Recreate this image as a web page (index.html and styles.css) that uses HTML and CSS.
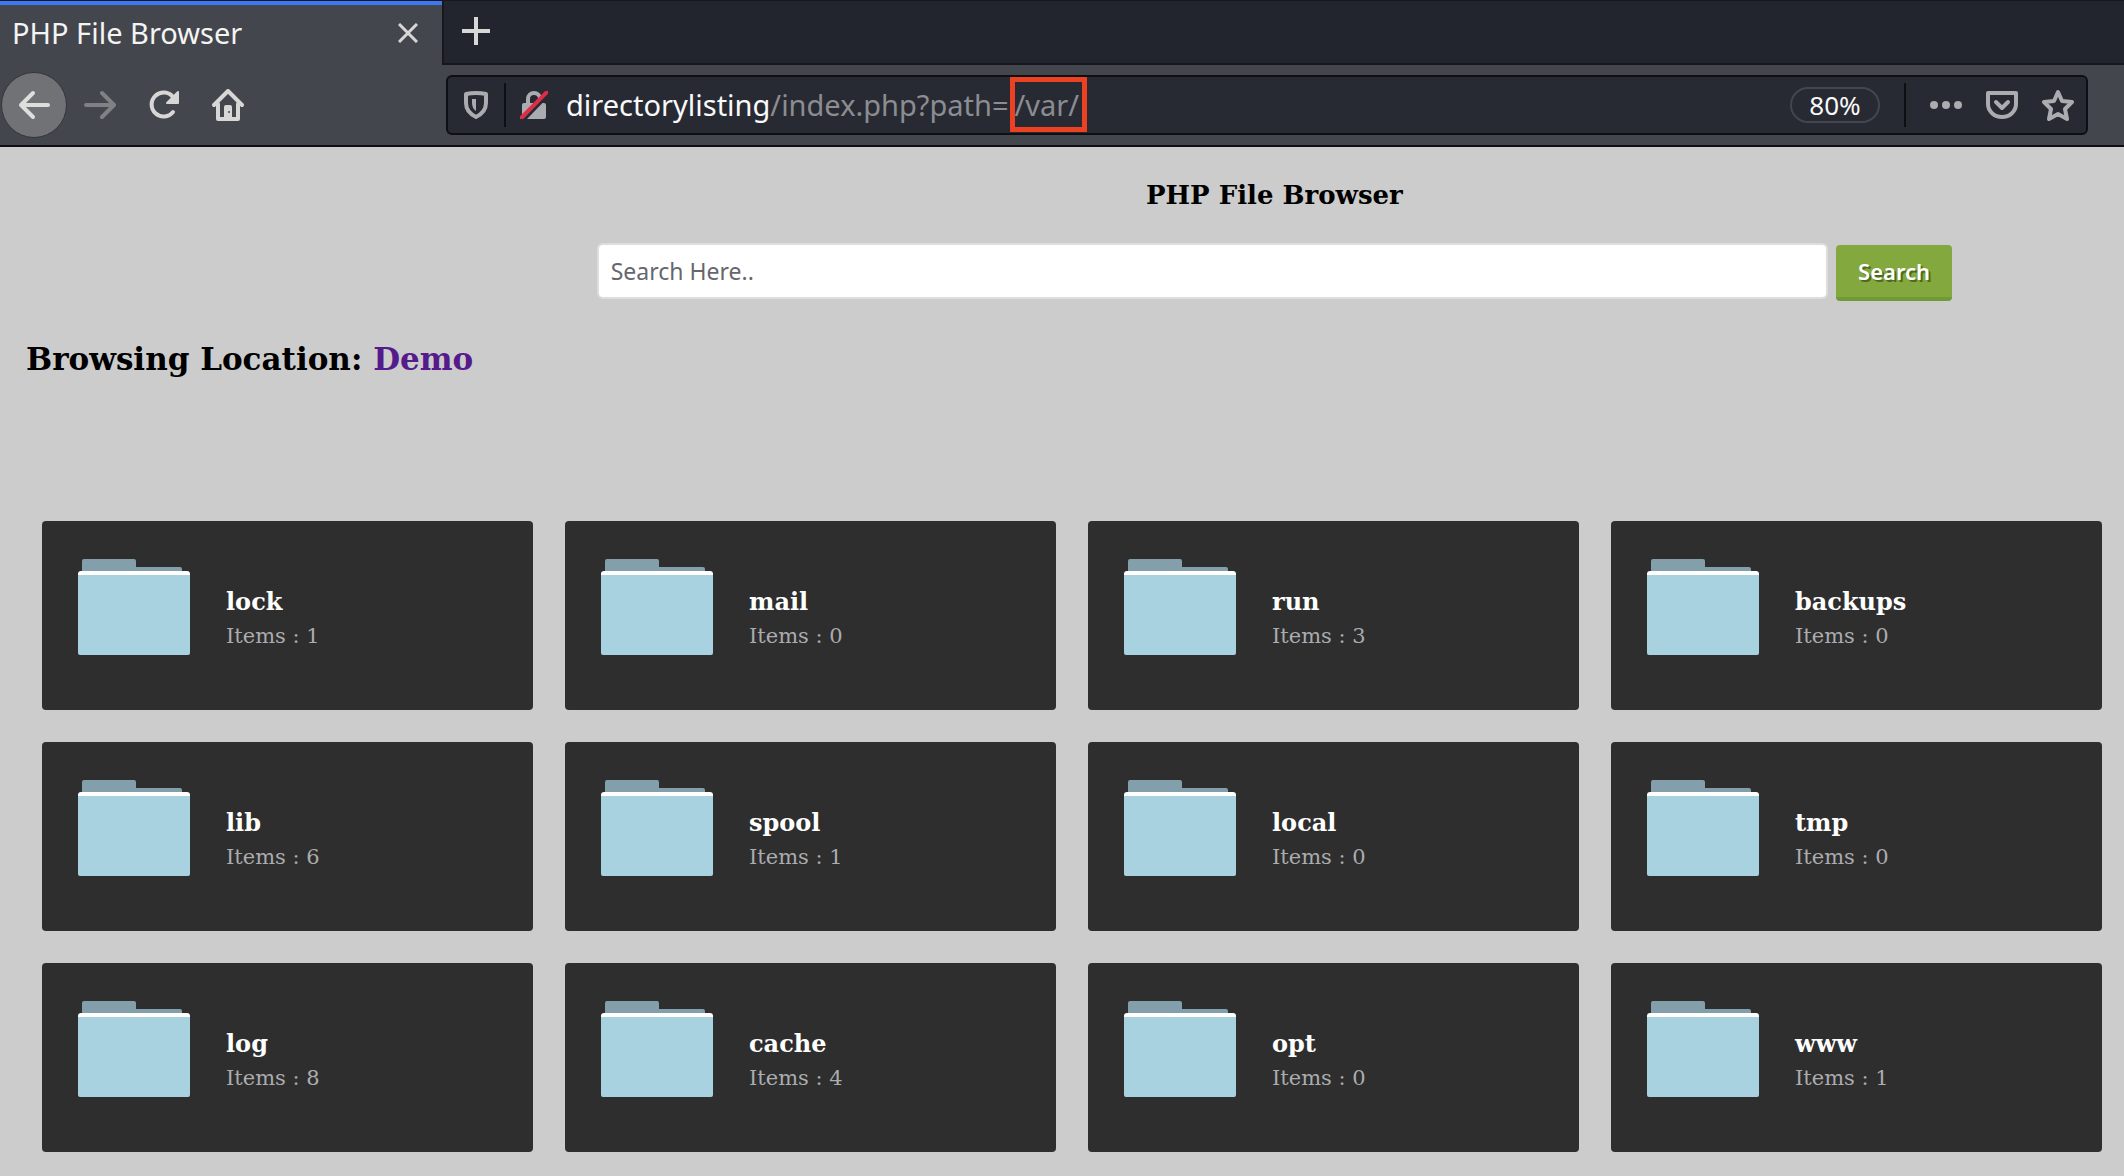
FILE: index.html
```html
<!DOCTYPE html>
<html lang="en">
<head>
<meta charset="utf-8">
<title>PHP File Browser</title>
<link rel="stylesheet" href="styles.css">
</head>
<body>
<svg width="0" height="0" class="defs" aria-hidden="true">
  <symbol id="folder" viewBox="0 0 112 96">
    <path d="M4 16V2q0-2 2-2h50q2 0 2 2v6h44q2 0 2 2v6z" fill="#829fab"/>
    <rect x="0" y="12" width="112" height="20" rx="3" fill="#fff"/>
    <path d="M0 16h112v78q0 2-2 2H2q-2 0-2-2z" fill="#a9d2e0"/>
  </symbol>
</svg>
<header class="browser">
  <div class="tabs">
    <div class="tab">
      <span class="tab-title">PHP File Browser</span>
      <button class="icon-button" aria-label="Close tab"><svg width="20" height="20" viewBox="0 0 20 20" fill="none" stroke="#d7d7d5" stroke-width="3"><path d="M1 1l18 18M19 1L1 19"/></svg></button>
    </div>
    <button class="icon-button new-tab" aria-label="New tab"><svg width="28" height="28" viewBox="0 0 28 28" fill="none" stroke="#d7d7d5" stroke-width="4"><path d="M14 0v28M0 14h28"/></svg></button>
  </div>
  <nav class="toolbar" aria-label="Browser navigation">
    <div class="nav-buttons">
      <button class="icon-button back" aria-label="Back"><svg width="32" height="32" viewBox="0 0 32 32" fill="none" stroke="#dededc" stroke-width="4" stroke-linecap="round" stroke-linejoin="round"><path d="M15 4L3 16l12 12M3 16h27"/></svg></button>
      <button class="icon-button" aria-label="Forward"><svg width="32" height="32" viewBox="0 0 32 32" fill="none" stroke="#808184" stroke-width="4" stroke-linecap="round" stroke-linejoin="round"><path d="M18 4l12 12-12 12M30 16H2"/></svg></button>
      <button class="icon-button" aria-label="Reload"><svg width="32" height="32" viewBox="0 0 32 32" fill="none" stroke="#d7d7d5" stroke-width="4" stroke-linecap="round"><path d="M25 23a12 12 0 1 1 0-15"/><path d="M30 3v11H19z" fill="#d7d7d5" stroke-width="2" stroke-linejoin="round"/></svg></button>
      <button class="icon-button" aria-label="Home"><svg width="32" height="32" viewBox="0 0 32 32" fill="none" stroke="#d7d7d5" stroke-width="4" stroke-linecap="round" stroke-linejoin="round"><path d="M2 16L16 2l14 14"/><path d="M6 15v15h20V15"/><path d="M12 30V18q0-2 2-2h4q2 0 2 2v12z" fill="#d7d7d5" stroke="none"/><circle cx="17" cy="23" r="1" fill="#43464d" stroke="none"/></svg></button>
    </div>
    <div class="address">
      <button class="icon-button shield" aria-label="Tracking protection"><svg width="24" height="28" viewBox="0 0 24 28" fill="none" stroke="#abacaf" stroke-width="4" stroke-linejoin="round"><path d="M2 3q10-2 20 0v9c0 7-4 11-10 14C6 23 2 19 2 12z"/><path d="M12 8v12q-4-3-4-8V8z" fill="#abacaf" stroke="none"/></svg></button>
      <button class="icon-button lock" aria-label="Connection is not secure"><svg width="28" height="28" viewBox="0 0 28 28"><path d="M8 14V8a6 6 0 0 1 12 0v6" fill="none" stroke="#abacaf" stroke-width="4"/><rect x="2" y="12" width="24" height="16" rx="2" fill="#abacaf"/><path d="M4 29L29 3" stroke="#282a33" stroke-width="3"/><path d="M1 27L27 1" stroke="#e22b44" stroke-width="4" stroke-linecap="round"/></svg></button>
      <div class="url"><span class="host">directorylisting</span>/index.php?path=<span class="marked">/var/</span></div>
      <button class="zoom-level">80%</button>
      <div class="actions">
        <button class="icon-button" aria-label="Page actions"><svg width="32" height="32" viewBox="0 0 32 32" fill="#abacaf"><circle cx="4" cy="16" r="4"/><circle cx="16" cy="16" r="4"/><circle cx="28" cy="16" r="4"/></svg></button>
        <button class="icon-button" aria-label="Save to Pocket"><svg width="32" height="32" viewBox="0 0 32 32" fill="none" stroke="#abacaf" stroke-width="4" stroke-linecap="round" stroke-linejoin="round"><path d="M2 4h28v11a14 13 0 0 1-28 0z"/><path d="M10 13l6 6 6-6"/></svg></button>
        <button class="icon-button" aria-label="Bookmark this page"><svg width="32" height="32" viewBox="0 0 32 32" fill="none" stroke="#abacaf" stroke-width="4" stroke-linejoin="round"><path d="M16 3l4 9 10 1-7 7 2 10-9-5-9 5 2-10-7-7 10-1z"/></svg></button>
      </div>
    </div>
  </nav>
</header>
<main>
  <div class="top">
    <h1>PHP File Browser</h1>
    <form class="search">
      <input type="text" placeholder="Search Here.." aria-label="Search files">
      <button type="button">Search</button>
    </form>
  </div>
  <h2>Browsing Location: <a href="#">Demo</a></h2>
  <ul class="folders">
    <li><svg><use href="#folder"/></svg><div><h3>lock</h3><p>Items : 1</p></div></li>
    <li><svg><use href="#folder"/></svg><div><h3>mail</h3><p>Items : 0</p></div></li>
    <li><svg><use href="#folder"/></svg><div><h3>run</h3><p>Items : 3</p></div></li>
    <li><svg><use href="#folder"/></svg><div><h3>backups</h3><p>Items : 0</p></div></li>
    <li><svg><use href="#folder"/></svg><div><h3>lib</h3><p>Items : 6</p></div></li>
    <li><svg><use href="#folder"/></svg><div><h3>spool</h3><p>Items : 1</p></div></li>
    <li><svg><use href="#folder"/></svg><div><h3>local</h3><p>Items : 0</p></div></li>
    <li><svg><use href="#folder"/></svg><div><h3>tmp</h3><p>Items : 0</p></div></li>
    <li><svg><use href="#folder"/></svg><div><h3>log</h3><p>Items : 8</p></div></li>
    <li><svg><use href="#folder"/></svg><div><h3>cache</h3><p>Items : 4</p></div></li>
    <li><svg><use href="#folder"/></svg><div><h3>opt</h3><p>Items : 0</p></div></li>
    <li><svg><use href="#folder"/></svg><div><h3>www</h3><p>Items : 1</p></div></li>
  </ul>
</main>
</body>
</html>
```
FILE: styles.css
```css
* { box-sizing: border-box; }
body {
  margin: 0;
  background: #cccccc;
  color: #000;
  font-family: "DejaVu Serif", serif;
}
h1, h2, h3, p, ul { margin: 0; padding: 0; }
button, input { font-family: "Noto Sans", sans-serif; }
.defs { position: absolute; }

.browser {
  font-family: "Noto Sans", sans-serif;
  background: #43464d;
  border-bottom: 2px solid #0e0f13;
}
.icon-button {
  display: flex;
  align-items: center;
  justify-content: center;
  padding: 0;
  border: 0;
  background: none;
}
.tabs {
  display: flex;
  height: 65px;
  background: #22252d;
  border-top: 1px solid #17181d;
}
.tab {
  display: flex;
  align-items: center;
  justify-content: space-between;
  width: 442px;
  padding: 0 24px 5px 12px;
  background: #43464d;
  border-top: 4px solid #3d78f2;
}
.tab-title { color: #f4f4f2; font-size: 29px; line-height: 40px; }
.new-tab {
  flex: 1;
  justify-content: flex-start;
  padding: 0 18px 3px;
  border-left: 2px solid #17181d;
  border-bottom: 2px solid #17181d;
}
.toolbar {
  display: flex;
  align-items: center;
  height: 80px;
  padding-right: 36px;
}
.nav-buttons {
  display: flex;
  align-items: center;
  gap: 32px;
  width: 446px;
  padding-left: 1px;
}
.back {
  width: 66px;
  height: 66px;
  margin-right: -15px;
  border: 1px solid #33353a;
  border-radius: 50%;
  background: #717276;
}
.address {
  display: flex;
  flex: 1;
  align-items: center;
  height: 60px;
  border: 2px solid #0e0f13;
  border-radius: 6px;
  background: #282a33;
}
.shield {
  width: 58px;
  height: 44px;
  border-right: 2px solid #0e0f13;
}
.lock { margin: 0 18px 0 14px; }
.url {
  flex: 1;
  color: #8b8d90;
  font-size: 29px;
  line-height: 40px;
  white-space: nowrap;
}
.host { color: #f9f9fa; }
.marked { position: relative; margin-left: 6px; }
.marked::after {
  content: "";
  position: absolute;
  inset: -8px -8px -8px -5px;
  border: 5px solid #ec4224;
}
.zoom-level {
  width: 90px;
  height: 36px;
  padding: 0;
  border: 2px solid #43464d;
  border-radius: 18px;
  background: none;
  color: #f9f9fa;
  font-size: 26px;
  line-height: 32px;
}
.actions {
  display: flex;
  align-items: center;
  gap: 24px;
  height: 44px;
  margin-left: 24px;
  padding: 0 12px 0 24px;
  border-left: 2px solid #0e0f13;
}

.top { margin-left: 20%; padding-top: 32px; }
h1 {
  font-size: 26px;
  line-height: 32px;
  text-align: center;
}
.search {
  display: flex;
  align-items: flex-start;
  gap: 8px;
  width: 80%;
  margin: 32px auto 0;
  padding: 0 2px;
}
.search input {
  flex: 1;
  min-width: 0;
  height: 56px;
  padding: 0 12px;
  border: 2px solid #dddddd;
  border-radius: 6px;
  background: #fff;
  font-size: 23px;
}
.search input::placeholder { color: #66666e; opacity: 1; }
.search button {
  width: 116px;
  height: 56px;
  margin-top: 2px;
  padding: 0;
  border: 0;
  border-bottom: 4px solid #709a37;
  border-radius: 4px;
  background: #82a83e;
  color: #fff;
  font-size: 22px;
  font-weight: 600;
  text-shadow: 2px 2px 0 #4d6b1f;
}
h2 {
  padding: 38px 26px 0;
  font-size: 31px;
  line-height: 40px;
}
h2 a { color: #551a8b; text-decoration: none; }

.folders {
  display: grid;
  grid-template-columns: repeat(4, 1fr);
  gap: 32px;
  padding: 142px 22px 24px 42px;
  list-style: none;
}
.folders li {
  display: flex;
  gap: 36px;
  min-height: 189px;
  padding: 38px 36px 0;
  border-radius: 4px;
  background: #2e2e2e;
}
.folders svg { flex: none; width: 112px; height: 96px; }
.folders div { padding-top: 27px; }
h3 { color: #fff; font-size: 24px; line-height: 32px; }
.folders p { color: #abacaf; font-size: 21px; line-height: 36px; }
```
